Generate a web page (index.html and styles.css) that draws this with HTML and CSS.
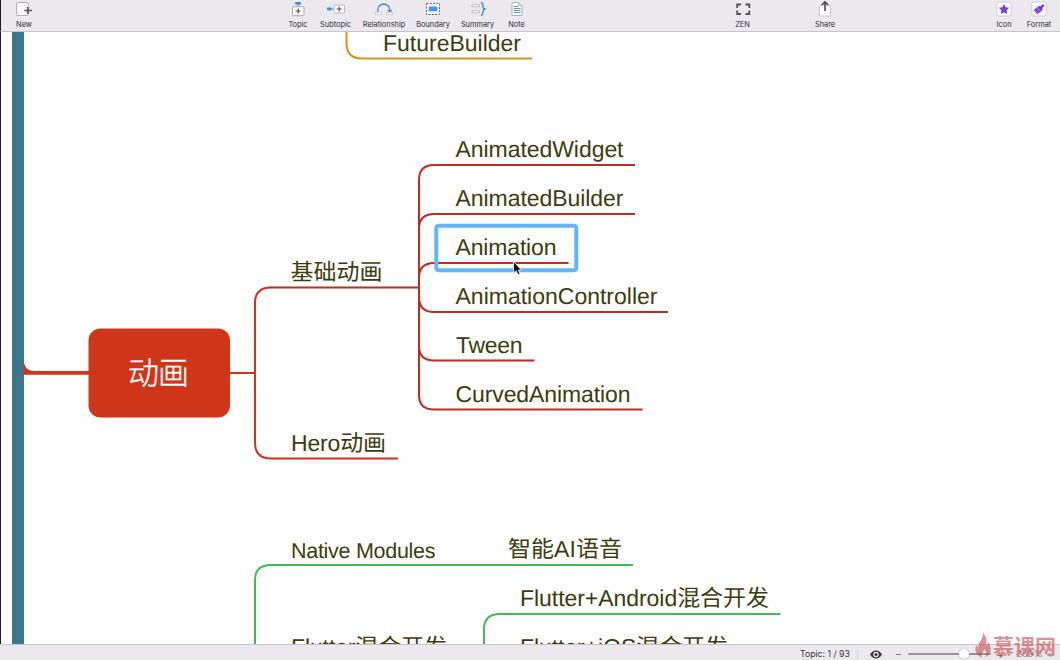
FILE: index.html
```html
<!DOCTYPE html>
<html lang="zh-CN">
<head>
<meta charset="utf-8">
<title>Mind map</title>
<link rel="stylesheet" href="styles.css">
</head>
<body>
<div class="app">
  <header class="toolbar">
    <div class="group group-new">
      <div class="tool w-new"><svg class="icon" viewBox="0 0 20 18"><rect x="2.500" y="2.500" width="12" height="13" rx="1.500" fill="#fafafc" stroke="#b0aeb3"/><path d="M14 6v9M9.500 10.500h8" stroke="#ebe9ee" stroke-width="3.500"/><path d="M14 7v7M10.500 10.500h7.500" stroke="#555459" stroke-width="1.700"/></svg><span>New</span></div>
    </div>
    <div class="group group-insert">
      <div class="tool w-topic"><svg class="icon" viewBox="0 0 20 18"><rect x="7.200" y="2" width="5.800" height="2.800" rx=".7" fill="#458fdc"/><path d="M10.200 4.500v3" stroke="#6aa9e5"/><rect x="4.500" y="6.700" width="11.500" height="9" rx="1.200" fill="#fbfbfc" stroke="#a9a8ac"/><path d="M10.200 8.500v5M7.700 11h5" stroke="#525156" stroke-width="1.200"/></svg><span>Topic</span></div>
      <div class="tool w-subtopic"><svg class="icon" viewBox="0 0 20 18"><rect x="1" y="7.500" width="4.800" height="3" rx=".8" fill="#458fdc"/><path d="M5.500 9h3" stroke="#65a4e4"/><rect x="8" y="5" width="10.500" height="8" rx=".8" fill="#f8f8fa" stroke="#b0afb4" stroke-width=".8"/><path d="M13.200 6.500v5M10.700 9h5" stroke="#525156" stroke-width="1.100"/></svg><span>Subtopic</span></div>
      <div class="tool w-relationship"><svg class="icon" viewBox="0 0 20 18"><path d="M3.800 12V10a6 6 0 0 1 12 0v2" fill="none" stroke="#3e8bdc" stroke-width="1.300"/><path d="m13.600 9.800 2.200 2.400 2.200-2.400" fill="none" stroke="#3e8bdc" stroke-width="1.100"/><rect x="1.500" y="12.500" width="6" height="2" fill="#fff" stroke="#bbb9be" stroke-width=".6"/><rect x="12.500" y="12.500" width="6" height="2" fill="#fff" stroke="#bbb9be" stroke-width=".6"/></svg><span>Relationship</span></div>
      <div class="tool w-boundary"><svg class="icon" viewBox="0 0 20 18"><rect x="3.500" y="3.500" width="13" height="11" fill="#f7f7fa" stroke="#66656a" stroke-width="1" stroke-dasharray="2 1.300"/><rect x="5.800" y="6.500" width="8.600" height="4.800" rx=".6" fill="#4296e8"/></svg><span>Boundary</span></div>
      <div class="tool w-summary"><svg class="icon" viewBox="0 0 20 18"><path d="M4 4.700h7.500v2H4zM4 10.800h7.500v2H4z" fill="#fff" stroke="#a9a8ad" stroke-width=".7"/><path d="M13 2.500c2 .5 2 2 2 4 0 1.600.2 2 1.700 2.500-1.500.5-1.700 1-1.700 2.600 0 2 0 3.400-2 3.900" fill="none" stroke="#3f90df" stroke-width="1.400"/></svg><span>Summary</span></div>
      <div class="tool w-note"><svg class="icon" viewBox="0 0 20 18"><path d="M5 2.500h6.500l3.500 3.300v9.700H5z" fill="#fff" stroke="#a9a8ad" stroke-width=".9"/><path d="M11.500 2.500v3.200H15" fill="#dedde3" stroke="#a9a8ad" stroke-width=".7"/><path d="M6.700 6.500H11M6.700 8.500h6.800M6.700 10.500h6.800M6.700 12.500h6.800" stroke="#5598df"/></svg><span>Note</span></div>
    </div>
    <div class="group group-view">
      <div class="tool w-zen"><svg class="icon" viewBox="0 0 20 18"><path d="M8 4.500H4.200V8M12.500 4.500h3.800V8M4.200 10.500V14H8M16.300 10.500V14h-3.800" fill="none" stroke="#504f54" stroke-width="1.800"/></svg><span>ZEN</span></div>
      <div class="tool w-share"><svg class="icon" viewBox="0 0 20 18"><rect x="4.500" y="5.500" width="11" height="10.500" rx="1" fill="#fcfcfd" stroke="#bbb9bf" stroke-width=".8"/><path d="M10 11V2M6.800 5 10 1.800 13.200 5" fill="none" stroke="#4c4b50" stroke-width="1.600"/></svg><span>Share</span></div>
    </div>
    <div class="group group-panels">
      <div class="tool w-icon"><svg class="icon" viewBox="0 0 20 18"><rect x="2.800" y="2" width="14.400" height="14" rx="2" fill="#fbf9fe" stroke="#c9c5d0" stroke-width=".8"/><path d="m10 4 1.600 3.300 3.600.5-2.600 2.500.6 3.600-3.200-1.700-3.200 1.700.6-3.600-2.600-2.500 3.600-.5z" fill="#7a3fd2"/></svg><span>Icon</span></div>
      <div class="tool w-format"><svg class="icon" viewBox="0 0 20 18"><rect x="2.800" y="2" width="14.400" height="14" rx="2" fill="#fbf9fe" stroke="#c9c5d0" stroke-width=".8"/><path d="m14.300 4-3.200 2.500-1-.7-1.600 1.600 3.800 3.800 1.500-1.600-.7-1 2.300-3z" fill="#7438d1"/><path d="m8.300 7.200 4.200 4.200c-1.500 1-2.800 1.700-3.900 2.800L5 10.800c-.1-1 1.300-2.800 3.300-3.600z" fill="#8450dc"/></svg><span>Format</span></div>
    </div>
  </header>

  <main class="canvas">
    <svg class="map" viewBox="0 32 1060 612" width="1060" height="612">
      <rect class="edge-left" x="0" y="32" width="1" height="612"/>
      <rect class="trunk" x="12" y="32" width="12" height="612"/>

      <path class="line orange" d="M346.500 32V43Q346.500 58.500 362 58.500H532"/>
      <text class="label" x="383" y="51" textLength="138">FutureBuilder</text>

      <path class="root-link" d="M23.500 361C25 368 28 371 35 371H90V374.700H23.500Z"/>
      <path class="line scarlet" d="M229 373H255M271 287.500Q255 287.500 255 303V443Q255 458.500 271 458.500H398"/>
      <path class="line red" d="M270 287.500H419"/>
      <path class="line red" d="M635 165H434Q419 165 419 180V395Q419 409.500 434 409.500H642.500"/>
      <path class="line red" d="M635 214H434Q419 214 419 229M568.500 263H434Q419 263 419 278M419 297Q419 312 434 312H668M419 346Q419 360.500 434 360.500H534.500"/>
      <rect class="root" x="88.500" y="328.500" width="141.500" height="89" rx="12"/>
      <text class="root-label" x="128" y="384" textLength="61">动画</text>
      <text class="label" x="290.500" y="279.500" textLength="92">基础动画</text>
      <text class="label" x="291" y="450.500" textLength="95">Hero动画</text>

      <text class="label" x="455.500" y="157" textLength="168">AnimatedWidget</text>
      <text class="label" x="455.500" y="206" textLength="168">AnimatedBuilder</text>
      <text class="label" x="455.500" y="255" textLength="101">Animation</text>
      <text class="label" x="455.500" y="304" textLength="202">AnimationController</text>
      <text class="label" x="456" y="353" textLength="66.500">Tween</text>
      <text class="label" x="455.500" y="402" textLength="175">CurvedAnimation</text>
      <rect class="selection" x="436.300" y="225.800" width="140" height="44.500" rx="2.500"/>

      <path class="line green" d="M255 646V580Q255 565 271 565H633"/>
      <path class="line green" d="M484 646V629Q484 614 500 614H780.500"/>
      <text class="label small" x="291" y="557.500" textLength="144.500">Native Modules</text>
      <text class="label" x="508" y="557" textLength="114">智能AI语音</text>
      <text class="label" x="520" y="606" textLength="249">Flutter+Android混合开发</text>
      <text class="label" x="291" y="655" textLength="156">Flutter混合开发</text>
      <text class="label" x="520" y="655" textLength="208">Flutter+iOS混合开发</text>

      <path class="cursor" d="M513.500 261.500V273L516.100 270.700L518 274.800L520 273.900L518.300 270H521.500Z"/>
    </svg>
  </main>

  <footer class="status">
    <span class="count">Topic: 1 / 93</span>
    <span class="divider"></span>
    <svg class="eye" viewBox="0 0 12 9"><path d="M0 4.500C3-.8 9-.8 12 4.500 9 9.800 3 9.800 0 4.500z" fill="#3d3c42"/><circle cx="6" cy="4.500" r="2.700" fill="#ebe9ee"/><circle cx="6" cy="4.500" r="1.500" fill="#3d3c42"/></svg>
    <span class="minus"></span>
    <span class="slider"><span class="knob"></span></span>
    <span class="plus">+</span>
    <span class="zoom">259%</span>
    <svg class="chevron" viewBox="0 0 8 6"><path d="m1.500 1.500 2.500 3 2.500-3" fill="none" stroke="#89878e"/></svg>
  </footer>

  <div class="watermark">
    <svg class="flame" viewBox="0 0 17 26"><path d="M7.800 0C10.500 4 13 8 10.500 13.500c1.500-.5 2.500-1.700 2.700-3.500C16.500 15 17.500 21.500 10 25.500c2-3.500 1.500-5.500-.8-8.500C8.500 20 5.500 21.500 7 25.500.5 23-.7 17.500 1.200 13c.5 1.300 1 2 2 2.500C3 10 9 7 7.800 0z" fill="currentColor"/></svg>
    <span>慕课网</span>
  </div>
</div>
</body>
</html>
```
FILE: styles.css
```css
body {
  margin: 0;
  overflow: hidden;
  font-family: Inter, "Noto Sans CJK SC", sans-serif;
}
.app {
  position: relative;
  display: flex;
  flex-direction: column;
  width: 1060px;
  height: 660px;
  background: #fefefe;
}
.toolbar {
  box-sizing: border-box;
  display: flex;
  height: 32px;
  background: #ebe9ee;
  border-bottom: 1px solid #c6c4cb;
  border-left: 1px solid #1d1b20;
}
.group { display: flex; gap: 12px; }
.group-new { padding-left: 15px; }
.group-insert { margin-left: 256px; }
.group-view { margin-left: 208px; gap: 65px; }
.group-panels { margin-left: 162px; gap: 16px; }
.tool {
  display: flex;
  flex-direction: column;
  align-items: center;
  color: #2f2e33;
  font-size: 7.4px;
  line-height: 10px;
  white-space: nowrap;
}
.icon { flex: none; width: 20px; height: 18px; margin-bottom: 2px; }
.tool span { height: 10px; }
.w-new { width: 16px; }
.w-topic { width: 20px; }
.w-subtopic { width: 31px; }
.w-relationship { width: 42px; }
.w-boundary { width: 32px; }
.w-summary { width: 33px; }
.w-note { width: 21px; }
.w-zen { width: 15px; }
.w-share { width: 20px; }
.w-icon { width: 14px; }
.w-format { width: 24px; }

.canvas { height: 612px; overflow: hidden; }
.map { display: block; }
.edge-left { fill: #1d1b20; }
.trunk { fill: #3c768d; }
.line { fill: none; stroke-width: 2; }
.orange { stroke: #d3921f; }
.scarlet { stroke: #d3311b; }
.red { stroke: #c12b20; }
.green { stroke: #43b954; }
.root-link, .root { fill: #cf3519; }
.label {
  fill: #3b3d0d;
  font-family: "Liberation Sans", "Noto Sans CJK SC", sans-serif;
  font-size: 23px;
  text-rendering: geometricPrecision;
}
.small { font-size: 21.5px; }
.root-label {
  fill: #fff;
  stroke: #fff;
  stroke-width: .4;
  font-family: "Noto Sans CJK SC", sans-serif;
  font-size: 31px;
  font-weight: 300;
}
.selection { fill: none; stroke: #63b5f6; stroke-width: 4; }
.cursor { fill: #111; stroke: #fff; stroke-width: .8; }

.status {
  box-sizing: border-box;
  display: flex;
  align-items: center;
  height: 16px;
  padding: 3px 0 0 800px;
  background: #ebe9ee;
  border-top: 1px solid #c6c4cb;
  color: #36353a;
  font-size: 8.7px;
  line-height: 12px;
  white-space: nowrap;
}
.count { width: 57px; }
.divider { width: 1px; height: 11px; background: #d6d4da; }
.eye { width: 12px; height: 9px; margin-left: 12px; }
.minus { width: 5px; height: 1px; margin-left: 14px; background: #88868d; }
.slider {
  display: flex;
  align-items: center;
  width: 83px;
  height: 2px;
  margin-left: 7px;
  background: #96949b;
  border-radius: 1px;
}
.knob {
  flex: none;
  width: 10px;
  height: 10px;
  margin-left: 51px;
  border-radius: 50%;
  background: #fff;
  box-shadow: 0 0 1px #77757c;
}
.plus { width: 6px; margin-left: 6px; font-size: 10px; color: #77757c; }
.zoom { width: 24px; margin-left: 13px; font-size: 9.5px; color: #99979e; }
.chevron { width: 8px; height: 6px; margin-left: 4px; }

.watermark {
  position: absolute;
  left: 975px;
  top: 632px;
  display: flex;
  align-items: center;
  gap: 1px;
  height: 26px;
  color: #c4474b;
  opacity: .58;
  font: 700 21px/26px "Noto Sans CJK SC", sans-serif;
  white-space: nowrap;
}
.flame { width: 17px; height: 26px; }
```
